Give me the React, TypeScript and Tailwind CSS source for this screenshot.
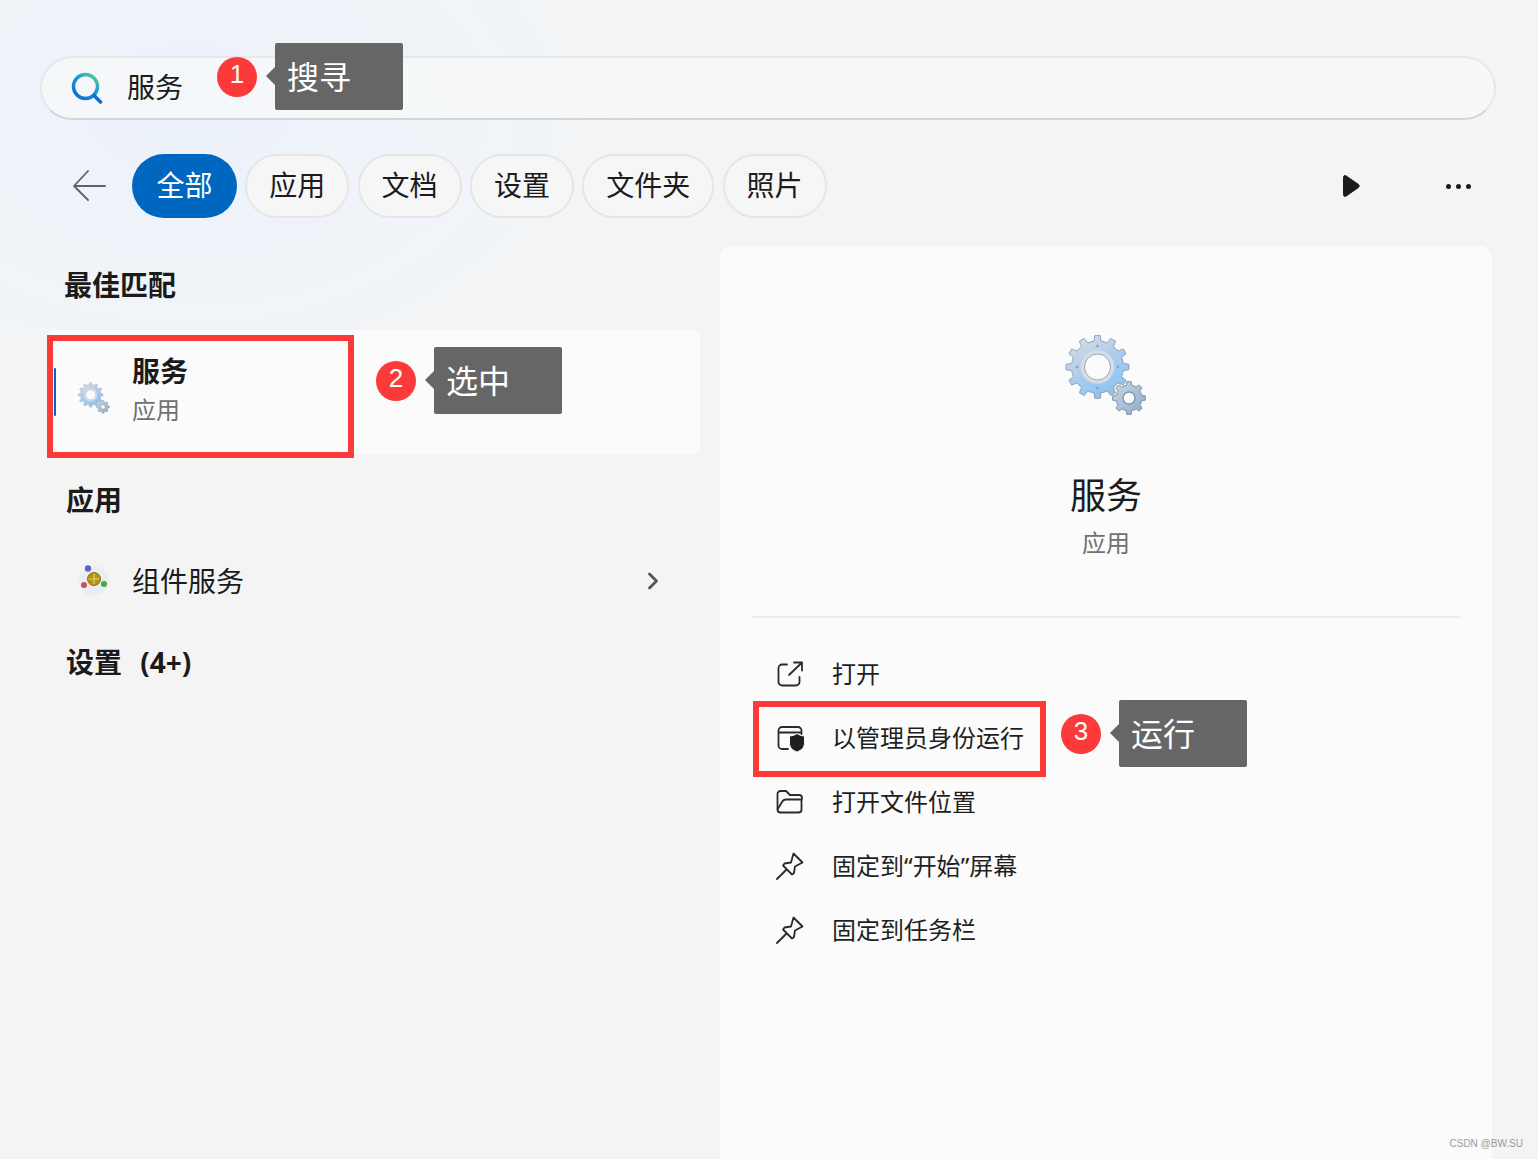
import { ReactNode } from "react";
import { ChevronRight } from "lucide-react";

const FONT = "font-['Noto_Sans_CJK_SC','Noto_Sans',sans-serif]";

// builds the toothed outline used by the gear icons
function gearPath(cx: number, cy: number, outer: number, inner: number, teeth: number) {
  const pts: string[] = [];
  const step = (Math.PI * 2) / teeth;
  for (let i = 0; i < teeth; i++) {
    const a = i * step - Math.PI / 2;
    const offsets: [number, number][] = [
      [-0.5, inner],
      [-0.26, inner],
      [-0.17, outer],
      [0.17, outer],
      [0.26, inner],
    ];
    offsets.forEach(([o, r]) => {
      const t = a + o * step;
      pts.push(`${(cx + Math.cos(t) * r).toFixed(2)} ${(cy + Math.sin(t) * r).toFixed(2)}`);
    });
  }
  return `M${pts.join("L")}Z`;
}

function GearIcon({ size, id }: { size: number; id: string }) {
  return (
    <svg width={size} height={size} viewBox="0 0 82 82">
      <defs>
        <linearGradient id={`${id}-a`} x1="0.1" y1="0" x2="0.7" y2="1">
          <stop offset="0" stopColor="#d9e0e8" />
          <stop offset="0.4" stopColor="#b9cfe8" />
          <stop offset="0.8" stopColor="#93c8f4" />
          <stop offset="1" stopColor="#a3b8d0" />
        </linearGradient>
        <linearGradient id={`${id}-b`} x1="0" y1="0" x2="1" y2="1">
          <stop offset="0" stopColor="#ccd6e0" />
          <stop offset="0.6" stopColor="#a4bed8" />
          <stop offset="1" stopColor="#8fa6c0" />
        </linearGradient>
      </defs>
      <path d={gearPath(64, 64, 16.5, 13, 8)} fill={`url(#${id}-b)`} stroke="#7f93aa" strokeWidth="1" strokeLinejoin="round" />
      <circle cx="64" cy="64" r="6" fill="#fbfbfb" stroke="#8598ad" strokeWidth="1.500" />
      <path d={gearPath(32.5, 33, 31.5, 26, 12)} fill={`url(#${id}-a)`} stroke="#8fa3ba" strokeWidth="1" strokeLinejoin="round" />
      <circle cx="32.5" cy="33" r="15" fill="#fbfbfb" stroke="#d5dce4" strokeWidth="3.500" />
      <circle cx="32.5" cy="33" r="13" fill="#fbfbfb" stroke="#93a4b6" strokeWidth="1" />
      <circle cx="32.5" cy="12" r="1.200" fill="#8a9cb0" />
      <circle cx="53" cy="33" r="1.200" fill="#8a9cb0" />
      <circle cx="32.5" cy="54" r="1.200" fill="#8a9cb0" />
      <circle cx="12" cy="33" r="1.200" fill="#8a9cb0" />
    </svg>
  );
}

function ComponentIcon() {
  return (
    <svg width="32" height="32" viewBox="0 0 32 32">
      <circle cx="16" cy="17" r="15" fill="#eaedf2" />
      <circle cx="16" cy="15" r="6.500" fill="#b3930f" stroke="#8a7210" strokeWidth="1" />
      <path d="M16 9.500v11M10.500 15h11" stroke="#e3d27a" strokeWidth="1.200" />
      <circle cx="10" cy="4.500" r="3.200" fill="#6464c8" />
      <circle cx="6" cy="21" r="3" fill="#c8505f" />
      <circle cx="26" cy="20" r="3" fill="#4aa84a" />
    </svg>
  );
}

function SearchIcon() {
  return (
    <svg width="34" height="34" viewBox="0 0 34 34" fill="none">
      <defs>
        <linearGradient id="search-grad" x1="1" y1="0" x2="0.2" y2="1">
          <stop offset="0" stopColor="#5fd68a" />
          <stop offset="0.45" stopColor="#1a9ad6" />
          <stop offset="1" stopColor="#0a6fd0" />
        </linearGradient>
      </defs>
      <circle cx="15.500" cy="15.500" r="12" stroke="url(#search-grad)" strokeWidth="3.400" />
      <path d="M24 24.500l6.500 6.500" stroke="#0a6fd0" strokeWidth="3.600" strokeLinecap="round" />
    </svg>
  );
}

function OpenIcon() {
  return (
    <svg width="28" height="28" viewBox="0 0 28 28" fill="none" stroke="#2a2a2a" strokeWidth="1.800" strokeLinecap="round" strokeLinejoin="round">
      <path d="M11 4.500H6a3.500 3.500 0 0 0-3.500 3.500v14A3.500 3.500 0 0 0 6 25.500h14a3.500 3.500 0 0 0 3.500-3.500v-5" />
      <path d="M13 15L26 2.500M18 2.500h8v8" />
    </svg>
  );
}

function AdminIcon() {
  return (
    <svg width="30" height="30" viewBox="0 0 30 30" fill="none">
      <path d="M12 26H6a3.500 3.500 0 0 1-3.500-3.500v-15A3.500 3.500 0 0 1 6 4h16a3.500 3.500 0 0 1 3.500 3.500V11M3 9.500h22" stroke="#2a2a2a" strokeWidth="1.800" strokeLinecap="round" />
      <path d="M21 10.500c2 1.600 4.500 2.400 7.500 2.400v7.300c0 4.400-3.200 7.200-7.500 8.800-4.300-1.600-7.500-4.400-7.500-8.800v-7.300c3 0 5.500-.8 7.500-2.400z" fill="#1f1f1f" stroke="#fbfbfb" strokeWidth="1" />
    </svg>
  );
}

function FolderIcon() {
  return (
    <svg width="28" height="28" viewBox="0 0 28 28" fill="none" stroke="#2a2a2a" strokeWidth="1.800" strokeLinejoin="round">
      <path d="M1.500 21.500V6a3 3 0 0 1 3-3h5.500l4 4h9a3 3 0 0 1 3 3v1.500" />
      <path d="M1.500 21.500a3 3 0 0 0 3 3h18a3 3 0 0 0 3-3v-10H10c-2 0-3 .6-4 2.500l-4.500 7.500z" />
    </svg>
  );
}

function PinIcon() {
  return (
    <svg width="28" height="28" viewBox="0 0 28 28" fill="none" stroke="#2a2a2a" strokeWidth="1.800" strokeLinejoin="round" strokeLinecap="round">
      <path d="M17.500 1.500l9 9-7.500 4-1 6.500-2 1.500-9-9 1.500-2 6.500-1 2.500-9z" />
      <path d="M10.500 17.500L1 27" />
    </svg>
  );
}

function BackArrow() {
  return (
    <svg width="34" height="34" viewBox="0 0 34 34" fill="none" stroke="#5f6265" strokeWidth="1.800" strokeLinecap="round" strokeLinejoin="round">
      <path d="M2 17h31M16 2L2 17l14 14" />
    </svg>
  );
}

function Chip({ label, active }: { label: string; active?: boolean }) {
  return (
    <div
      className={
        active
          ? "flex h-16 w-[105px] items-center justify-center rounded-full bg-[#0067c0] pb-1 text-[28px] text-white"
          : "flex h-16 items-center rounded-full border-2 border-[#e6e6e6] bg-[#f6f6f6] px-[22px] pb-1 text-[28px] text-[#1b1b1b]"
      }
    >
      {label}
    </div>
  );
}

function ActionRow({ icon, label }: { icon: ReactNode; label: ReactNode }) {
  return (
    <div className="flex h-16 items-center">
      <div className="flex w-20 items-center pl-6">{icon}</div>
      <span className="pb-[2px] text-2xl text-[#1f1f1f]">{label}</span>
    </div>
  );
}

function Note({ n, text, className }: { n: number; text: string; className: string }) {
  return (
    <div className={`absolute flex items-center gap-[18px] ${className}`}>
      <div className="flex h-10 w-10 items-center justify-center rounded-full bg-[#fc3a3a] pb-1 font-['Liberation_Sans',sans-serif] text-[26px] text-white">
        {n}
      </div>
      <div className="relative flex h-[67px] w-32 items-center rounded-[2px] bg-[#666666] pb-1 pl-3 text-[32px] text-white">
        <div className="absolute left-[-9px] top-[24px] h-0 w-0 border-y-[9px] border-r-[9px] border-y-transparent border-r-[#666666]" />
        {text}
      </div>
    </div>
  );
}

export default function App() {
  return (
    <div
      className={`relative h-[1159px] w-[1538px] overflow-hidden bg-[#f4f4f4] bg-[radial-gradient(ellipse_520px_340px_at_190px_110px,#ecf2fb_0%,#f1f4f8_60%,#f4f4f4_100%)] pt-[56px] ${FONT}`}
    >
      {/* Search bar */}
      <div className="ml-[40px] flex h-16 w-[1456px] items-center rounded-full border-2 border-[#e5e7ea] border-b-[#d3d5d8] bg-[#f8f9fa]/70 pl-[28px]">
        <SearchIcon />
        <span className="ml-[23px] pb-1 text-[28px] text-[#1b1b1b]">服务</span>
      </div>

      {/* Filter row */}
      <div className="mt-[34px] flex h-16 items-center pl-[72px] pr-[67px]">
        <BackArrow />
        <div className="ml-[26px] flex items-center gap-[8.3px]">
          <Chip label="全部" active />
          <Chip label="应用" />
          <Chip label="文档" />
          <Chip label="设置" />
          <Chip label="文件夹" />
          <Chip label="照片" />
        </div>
        <div className="ml-auto flex items-center gap-[86px]">
          <svg width="18" height="24" viewBox="0 0 18 24">
            <path d="M1.500 3.500c0-1.800 1.300-2.400 2.700-1.500l12 8.300c1.300.9 1.300 2.500 0 3.400l-12 8.300c-1.400.9-2.700.3-2.700-1.500z" fill="#1b1b1b" stroke="#1b1b1b" />
          </svg>
          <div className="flex items-center gap-[5px]">
            <div className="h-[5px] w-[5px] rounded-full bg-[#1b1b1b]" />
            <div className="h-[5px] w-[5px] rounded-full bg-[#1b1b1b]" />
            <div className="h-[5px] w-[5px] rounded-full bg-[#1b1b1b]" />
          </div>
        </div>
      </div>

      <div className="mt-[28px] flex items-start">
        {/* Left column */}
        <div className="w-[720px]">
          <div className="flex h-20 items-center pb-1 pl-16 text-[28px] font-bold text-[#1b1b1b]">最佳匹配</div>
          <div className="relative ml-[47px] mt-1 flex h-[124px] w-[653px] items-center rounded-lg bg-[#fbfbfb]">
            <div className="absolute left-[7px] top-[38px] h-12 w-[2px] rounded-full bg-[#0067c0]" />
            <div className="ml-[31px] mt-3">
              <GearIcon size={32} id="gear-small" />
            </div>
            <div className="-mt-[6px] ml-[22px]">
              <div className="text-[28px] font-bold leading-[40px] text-[#1b1b1b]">服务</div>
              <div className="text-2xl leading-[38px] text-[#707070]">应用</div>
            </div>
          </div>
          <div className="mt-[22px] flex h-12 items-center pb-[2px] pl-[66px] text-[28px] font-bold text-[#1b1b1b]">应用</div>
          <div className="mt-6 flex h-16 items-center pl-[78px] pr-[53px]">
            <ComponentIcon />
            <span className="ml-[22px] text-[28px] text-[#1b1b1b]">组件服务</span>
            <ChevronRight className="ml-auto mt-[2px] h-7 w-7 text-[#555555]" strokeWidth={2.4} />
          </div>
          <div className="mt-[30px] flex h-10 items-center pl-[66px] font-['Noto_Sans','Noto_Sans_CJK_SC',sans-serif] text-[28px] font-bold text-[#1b1b1b] [word-spacing:11px]">
            设置 (4+)
          </div>
        </div>

        {/* Right panel */}
        <div className="h-[913px] w-[772px] rounded-t-xl bg-[#fbfbfb] px-8">
          <div className="flex flex-col items-center border-b-2 border-[#ebebeb] pb-[56px] pt-[88px]">
            <GearIcon size={82} id="gear-large" />
            <div className="mt-[50px] text-[36px] leading-[54px] text-[#1b1b1b]">服务</div>
            <div className="mt-1 text-2xl leading-[36px] text-[#707070]">应用</div>
          </div>
          <div className="pt-6">
            <ActionRow icon={<OpenIcon />} label="打开" />
            <ActionRow icon={<AdminIcon />} label="以管理员身份运行" />
            <ActionRow icon={<FolderIcon />} label="打开文件位置" />
            <ActionRow
              icon={<PinIcon />}
              label={
                <>
                  固定到<span className="font-['Noto_Sans',sans-serif]">“</span>开始
                  <span className="font-['Noto_Sans',sans-serif]">”</span>屏幕
                </>
              }
            />
            <ActionRow icon={<PinIcon />} label="固定到任务栏" />
          </div>
        </div>
      </div>

      {/* Annotation overlays */}
      <div className="absolute left-[47px] top-[335px] h-[123px] w-[307px] border-[6px] border-[#fc3a3a]" />
      <div className="absolute left-[753px] top-[701px] h-[76px] w-[293px] border-[6px] border-[#fc3a3a]" />
      <Note n={1} text="搜寻" className="left-[217px] top-[43px]" />
      <Note n={2} text="选中" className="left-[376px] top-[347px]" />
      <Note n={3} text="运行" className="left-[1061px] top-[700px]" />

      <div className="absolute bottom-[8px] right-[15px] font-['Liberation_Sans',sans-serif] text-[10px] text-[#9a9a9a]">CSDN @BW.SU</div>
    </div>
  );
}
